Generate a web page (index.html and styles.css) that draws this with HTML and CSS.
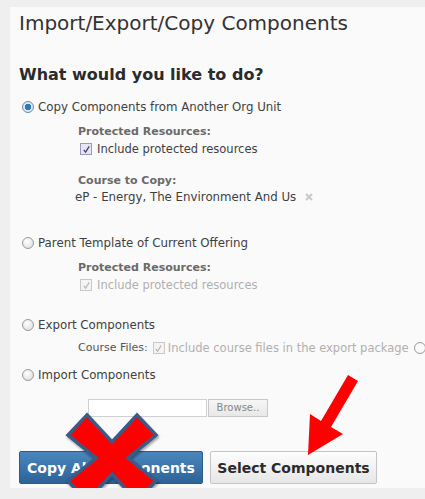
FILE: index.html
```html
<!DOCTYPE html>
<html>
<head>
<meta charset="utf-8">
<link rel="stylesheet" href="styles.css">
</head>
<body>
<div class="panel">
  <h1 class="title">Import/Export/Copy Components</h1>
  <h2 class="question">What would you like to do?</h2>

  <div class="option first">
    <label class="radio-row"><span class="radio checked"></span>Copy Components from Another Org Unit</label>
    <div class="sub">
      <div class="field-label">Protected Resources:</div>
      <label class="check-row"><span class="check"><svg viewBox="0 0 10 10" width="9" height="9"><path d="M2 5.5 L4 8 L8 1.5" fill="none" stroke="#3a3f86" stroke-width="1.4"/></svg></span>Include protected resources</label>
      <div class="field-label course">Course to Copy:</div>
      <div class="course-name">eP - Energy, The Environment And Us <svg class="remove" viewBox="0 0 10 10" width="10" height="10"><path d="M2 2 L8 8 M8 2 L2 8" stroke="#c8c8c8" stroke-width="2"/></svg></div>
    </div>
  </div>

  <div class="option template">
    <label class="radio-row"><span class="radio"></span>Parent Template of Current Offering</label>
    <div class="sub">
      <div class="field-label">Protected Resources:</div>
      <label class="check-row disabled"><span class="check"><svg viewBox="0 0 10 10" width="9" height="9"><path d="M2 5.5 L4 8 L8 1.5" fill="none" stroke="#b4b4b4" stroke-width="1.2"/></svg></span>Include protected resources</label>
    </div>
  </div>

  <div class="option export">
    <label class="radio-row"><span class="radio"></span>Export Components</label>
    <div class="inline-field">
      <span class="inline-label">Course Files:</span>
      <label class="check-row disabled"><span class="check"><svg viewBox="0 0 10 10" width="9" height="9"><path d="M2 5.5 L4 8 L8 1.5" fill="none" stroke="#b4b4b4" stroke-width="1.2"/></svg></span>Include course files in the export package</label>
      <span class="help"></span>
    </div>
  </div>

  <div class="option import">
    <label class="radio-row"><span class="radio"></span>Import Components</label>
    <div class="file-row">
      <span class="file-box"></span><span class="browse">Browse..</span>
    </div>
  </div>

  <div class="actions">
    <button class="btn primary">Copy All Components</button>
    <button class="btn secondary">Select Components</button>
  </div>

  <svg class="mark-x" viewBox="0 0 100 100" width="100" height="100">
    <path d="M25 7 L50 34 L75 7 L94 27 L66 50 L94 73 L75 93 L50 66 L25 93 L6 73 L34 50 L6 27 Z" fill="#ff0000" stroke="#3b5a86" stroke-width="3.5" stroke-linejoin="miter"/>
  </svg>
  <svg class="mark-arrow" viewBox="0 0 70 90" width="70" height="90">
    <path d="M59 8 L69 14 L42 60 L54 67 L19 88 L21 47 L32 54 Z" fill="#ff0000"/>
  </svg>
</div>
</body>
</html>
```
FILE: styles.css
```css
html, body {
  margin: 0;
  padding: 0;
  background: #efefef;
}

body {
  font-family: "DejaVu Sans", Verdana, sans-serif;
  color: #333;
  overflow: hidden;
}

.panel {
  position: relative;
  margin: 7px 0 0 10px;
  height: 481px;
  background: #fafafa;
  padding-left: 9px;
  box-sizing: border-box;
}

.title {
  margin: 0;
  padding-top: 4px;
  font-size: 20px;
  font-weight: normal;
  color: #333;
  line-height: 24px;
}

.question {
  margin: 31px 0 0;
  font-size: 16px;
  font-weight: bold;
  color: #2b2b2b;
  line-height: 18px;
}

.radio-row {
  display: flex;
  align-items: center;
  gap: 4px;
  margin-left: 3px;
  font-size: 11.8px;
  color: #404040;
  line-height: 16px;
}

.radio {
  width: 10px;
  height: 10px;
  border-radius: 50%;
  border: 1px solid #9a9a9a;
  background: radial-gradient(circle at 40% 35%, #fff, #d8d8d8);
  box-sizing: content-box;
  flex: none;
}

.radio.checked {
  background: radial-gradient(circle at 50% 50%, #2d7ab8 0 3px, #dfe7ef 3.5px);
  border-color: #6d8aa6;
}

.sub {
  margin-left: 59px;
  margin-top: 9px;
}

.field-label {
  font-weight: bold;
  font-size: 11px;
  color: #6a6a6a;
  line-height: 16px;
}

.field-label.course {
  margin-top: 16px;
}

.check-row {
  display: flex;
  align-items: center;
  gap: 5px;
  margin-left: 2px;
  margin-top: 1px;
  font-size: 11.5px;
  color: #404040;
  line-height: 16px;
}

.check {
  width: 10px;
  height: 10px;
  border: 1px solid #9a9ab8;
  background: #e6e6f2;
  display: flex;
  align-items: center;
  justify-content: center;
  flex: none;
}

.check-row.disabled {
  color: #b0b0b0;
}

.check-row.disabled .check {
  border-color: #c8c8c8;
  background: #f4f4f4;
}

.course-name {
  margin-left: -3px;
  font-size: 11.8px;
  color: #404040;
  line-height: 16px;
  display: flex;
  align-items: center;
  gap: 8px;
}

.option.first {
  margin-top: 15px;
}

.option.template {
  margin-top: 30px;
}

.option.export {
  margin-top: 24px;
}

.inline-field {
  display: flex;
  align-items: center;
  gap: 5px;
  margin-left: 59px;
  margin-top: 7px;
  white-space: nowrap;
}

.inline-label {
  font-size: 11px;
  color: #555;
  line-height: 16px;
}

.inline-field .check-row {
  margin: 0;
  gap: 3px;
}

.help {
  width: 10px;
  height: 10px;
  border-radius: 50%;
  border: 1px solid #999;
  flex: none;
}

.option.import {
  margin-top: 11px;
}

.file-row {
  display: flex;
  margin-left: 69px;
  margin-top: 16px;
}

.file-box {
  width: 117px;
  height: 16px;
  background: #fff;
  border: 1px solid #d0d0d0;
}

.browse {
  width: 58px;
  height: 16px;
  border: 1px solid #c8c8c8;
  background: linear-gradient(#f6f6f6, #e8e8e8);
  font-size: 10px;
  color: #888;
  line-height: 16px;
  text-align: center;
  margin-left: 1px;
}

.actions {
  display: flex;
  gap: 7px;
  margin-top: 34px;
}

.btn {
  height: 33px;
  font-family: "DejaVu Sans", Verdana, sans-serif;
  font-weight: bold;
  font-size: 14px;
  border-radius: 2px;
  padding: 0;
}

.btn.primary {
  width: 184px;
  background: linear-gradient(#4a86bd, #2c6399);
  border: 1px solid #2a5b8a;
  color: #fff;
}

.btn.secondary {
  width: 167px;
  background: linear-gradient(#fdfdfd, #e6e6e6);
  border: 1px solid #c4c4c4;
  color: #2a2a2a;
}

.mark-x {
  position: absolute;
  left: 52px;
  top: 401px;
  filter: drop-shadow(1px 2px 1px rgba(0,0,0,0.35));
}

.mark-arrow {
  position: absolute;
  left: 279px;
  top: 360px;
}
```
